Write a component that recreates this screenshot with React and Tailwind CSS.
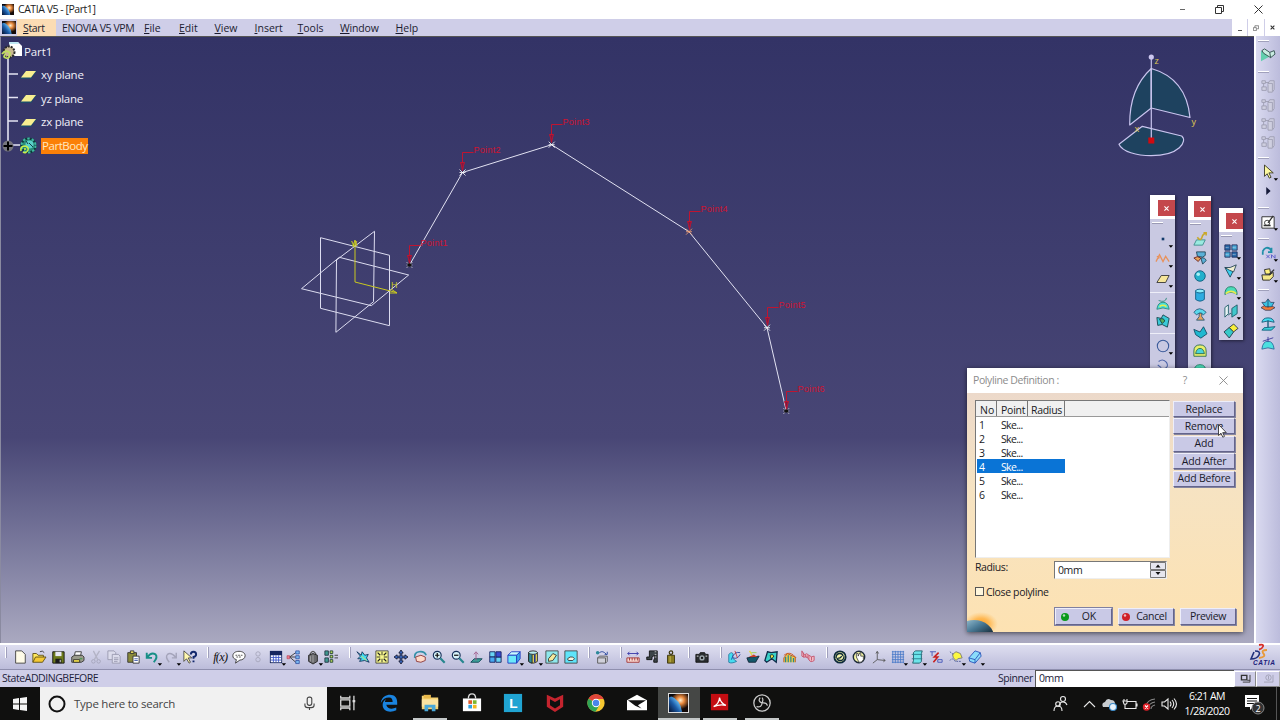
import clsx from 'clsx';

const C = '#45dcf0';
const N = '#16305a';

// 16x16 glyphs for every toolbar
const glyphs = {
    newFile: <path d="M3 1h7l4 4v10H3z" fill="#fffbe8" stroke="#3c3c3c" />,
    open: <g stroke="#5a4a10"><path d="M1 14V4h4l2 2h6v3" fill="#ffe95e" /><path d="M1 14l3-6h12l-4 6z" fill="#f5c935" /><path d="M9 2q3-2 5 1" fill="none" stroke="#333" /></g>,
    save: <g><path d="M2 2h13v13H2z" fill="#6d7a1c" stroke="#111" /><path d="M5 2h7v5H5z" fill="#e8e8f4" /><path d="M5 10h7v5H5z" fill="#1a1a1a" /><path d="M10 11h1v3h-1z" fill="#fff" /></g>,
    print: <g stroke="#333"><path d="M5 7l1-5h7l-1 5z" fill="#fff" /><path d="M2 8l3-2h9l2 2v4l-3 2H2z" fill="#9a9a8c" /><path d="M4 11h7v3H4z" fill="#f4e04a" /><path d="M11 10h3" stroke="#2a9a3a" /></g>,
    cut: <g fill="none" stroke="#a2a2b8"><path d="M5 1l5 10M12 1L6 11" stroke="#b4b4c6" strokeWidth="1.500" /><circle cx="5" cy="13" r="2" /><circle cx="11" cy="13" r="2" /></g>,
    copy: <g fill="#dcdcec" stroke="#9898ae"><path d="M1 1h7l2 2v8H1z" /><path d="M6 5h7l2 2v8H6z" /><path d="M8 9h5M8 11h5M8 13h4" /></g>,
    paste: <g stroke="#333"><path d="M2 3h10v11H2z" fill="#8a8a3a" /><path d="M5 1h4v3H5z" fill="#e6d860" /><path d="M8 7h7v8H8z" fill="#fff" /><path d="M9.500 10h4M9.500 12h4" stroke="#3a55aa" /></g>,
    undo: <path d="M2 3v6h6M3 8q4-6 9-3 3 3-2 9" fill="none" stroke="#178f86" strokeWidth="2.200" />,
    redo: <path d="M14 3v6H9M13 8Q8 2 4 5q-3 3 2 9" fill="none" stroke="#a4a4ba" strokeWidth="1.600" />,
    whats: <g><path d="M1 1v12l3-3 3 5 1.500-1L6 9h4z" fill="#fff8b0" stroke="#222" strokeWidth=".8" /><path d="M9 5q0-3 3-3t3 3q0 2-3 3v2M12 12v2" fill="none" stroke="#13286c" strokeWidth="2.200" /></g>,
    fx: <text x="-1" y="13" className="fill-[#111] font-['Liberation_Serif'] text-[14px] italic" textLength="17">f(x)</text>,
    chat: <g><path d="M8 1.500c4 0 7 2 7 5s-3 5-6 5L4 15l1-4C2 10 1 9 1 6.500c0-3 3-5 7-5z" fill="#fff" stroke="#333" /><path d="M4 6h8M5 8h6" stroke="#444" strokeDasharray="2 1" /></g>,
    link: <g fill="none" stroke="#a6a6ba"><circle cx="8" cy="4.500" r="2.500" /><circle cx="8" cy="11" r="2.500" /></g>,
    table: <g><path d="M1 1h14v14H1z" fill="#16265e" /><path d="M2 6h12v8H2z" fill="#fff" /><path d="M2 8.500h12M2 11.500h12M5 6v8M8 6v8M11 6v8" stroke="#3a55c8" /></g>,
    tree: <g><path d="M3 8l7-5M3 8h7M3 8l7 6" stroke="#333" fill="none" /><path d="M0 6.500h3v3.500H0z" fill="#ee7c90" stroke="#a34" strokeWidth=".6" /><path d="M10 1h4v3.500h-4zM10 6.500h4v3.500h-4zM10 12h4v3.500h-4z" fill="#7ab8f0" stroke="#24429a" strokeWidth=".8" /></g>,
    lock: <g><path d="M5 7V4q3-5 6 0v3" fill="none" stroke="#555" strokeWidth="1.500" /><path d="M3 6l5-2 5 2v7l-5 3-5-3z" fill="#6a6a6e" stroke="#222" /><path d="M5 7v6M8 6v8" stroke="#aaa" /></g>,
    struct: <g><path d="M1 1h4v5H1zM1 9h4v5H1z" fill="#3f9a90" stroke="#234" /><path d="M7 1h3v3H7zM7 6h3v3H7zM7 11h3v3H7z" fill="#b8d85a" stroke="#243" /><path d="M12 6h4M12 9h4" stroke="#333" /></g>,

    fly: <g><path d="M1 2l5 4 1-4 3 4 4-1-2 4 3 5-5-2-6 1 2-3-4 0 3-3z" fill={C} stroke={N} /><path d="M6 7l6 5" stroke="#e8e050" /></g>,
    fitAll: <g><path d="M1 1h14v14H1z" fill="#f6f68c" stroke="#444" /><path d="M3 3l3 3M13 3l-3 3M3 13l3-3M13 13l-3-3" stroke="#222" strokeWidth="1.400" /><path d="M8 2v4M8 10v4M2 8h4M10 8h4" stroke="#222" /></g>,
    pan: <g fill="#3a68c0"><path d="M8 0l2.500 3.500H9V7h3.500V5.500L16 8l-3.500 2.500V9H9v3.500h1.500L8 16l-2.500-3.500H7V9H3.500v1.500L0 8l3.500-2.500V7H7V3.500H5.500z" stroke="#112" strokeWidth=".9" /></g>,
    rotate: <g><path d="M2 9q-1-6 5-7 6-1 8 4" fill="none" stroke="#3490a8" strokeWidth="2" /><path d="M3 8l6-2 5 2v4l-5 2-5-1z" fill="#ffd9c8" stroke="#833" /></g>,
    zoomIn: <g><circle cx="6" cy="6" r="4.500" fill="#d8f2f8" stroke="#16305a" strokeWidth="1.300" /><path d="M9.500 9.500l5 5" stroke="#26868e" strokeWidth="2.500" /><path d="M6 3.500v5M3.500 6h5" stroke="#111" strokeWidth="1.400" /></g>,
    zoomOut: <g><circle cx="6" cy="6" r="4.500" fill="#d8f2f8" stroke="#16305a" strokeWidth="1.300" /><path d="M9.500 9.500l5 5" stroke="#26868e" strokeWidth="2.500" /><path d="M3.500 6h5" stroke="#111" strokeWidth="1.400" /></g>,
    normal: <g><path d="M2 14l4-4h9l-4 4z" fill="#3aa098" stroke="#145" /><path d="M8 12V3M5.500 5L8 2l2.500 3" fill="none" stroke="#a05a8a" /></g>,
    multi: <g stroke="#16205e"><path d="M2 2h6v6H2zM9 8h6v6H9z" fill="#69d4f4" /><path d="M9 2h6v6H9z" fill="#3a4ad0" /><path d="M2 8h6v6H2z" fill="#48a8f0" /></g>,
    iso: <g stroke="#2038c0"><path d="M1 6l4-4h10l-4 4z" fill="#c8faff" /><path d="M1 6h10v9H1z" fill="#6ce8fa" /><path d="M11 6l4-4v8l-4 5z" fill="#3aa8e8" /></g>,
    shade: <g stroke="#222"><path d="M3 3v10q5 4 10 0V3z" fill="#f2e25a" /><path d="M3 3v10q2 2 4 2V4z" fill="#2f8a98" /><ellipse cx="8" cy="3" rx="5" ry="2" fill="#b8ecf0" /><path d="M10 5v9" stroke="#23338a" strokeWidth="2" /></g>,
    hide: <g><path d="M1 1h14v14H1z" fill="#8ee8ec" stroke="#444" /><path d="M4 10l5-6 4 2-4 6-5 1z" fill="#f5e99a" stroke="#333" /></g>,
    swap: <g><path d="M1 1h14v14H1z" fill="#5ee4fa" stroke="#444" /><path d="M4 10q3-3 6-2l2 2-2 2H5z" fill="#f4f4e0" stroke="#333" /></g>,
    swapVis: <g><circle cx="3" cy="3" r="2" fill="#2c8a9a" /><path d="M5 3q4-3 8 2M11 5h3V2" fill="none" stroke="#24429a" /><path d="M3 9l2-2h9v6l-2 2H3z" fill="#d0d0da" stroke="#555" /><path d="M3 9h9v6" fill="none" stroke="#555" /></g>,
    measure: <g><path d="M2 4h12M4 2L2 4l2 2M12 2l2 2-2 2" fill="none" stroke="#3334a8" /><path d="M1 9h14v5H1z" fill="#f8d8d0" stroke="#a03030" /><path d="M4 9v3M7 9v3M10 9v3M13 9v3" stroke="#a03030" /></g>,
    caliper: <g><path d="M5 1h9v13h-4v-3h1V6L8 8v3H2V8h3z" fill="#3c4448" stroke="#111" /><path d="M11 2h2M11 5h2M11 8h2" stroke="#ccc" /></g>,
    weight: <g stroke="#3a340c"><circle cx="8" cy="3" r="2" fill="none" strokeWidth="1.400" /><path d="M4 6h8v9H4z" fill="#8a7c22" /><path d="M7 7v7" stroke="#cfc25a" /></g>,
    camera: <g><path d="M1 5h4l1-2h5l1 2h3v9H1z" fill="#2a2d30" stroke="#111" /><circle cx="8" cy="9" r="3" fill="#9aa4aa" /><circle cx="8" cy="9" r="1.300" fill="#111" /><path d="M2 7h2M12 7h2" stroke="#eee" /></g>,

    sketchA: <g fill="none"><path d="M2 5q4-4 5 0-2 5 4 8-6 3-9 1z" fill={C} stroke="#2a7aa0" /><path d="M5 11Q8 1 15 3M7 9q5 2 8-4" stroke="#24429a" /><path d="M9 1l3 8" stroke="#c33" /></g>,
    ship: <g><path d="M1 9l14-2-4 7H3z" fill="#14586a" stroke="#123" /><path d="M3 8l6-3 4 3z" fill="#c83a2a" /><path d="M4 1l3 5" stroke="#e8d840" strokeWidth="1.500" /><path d="M6 3h6" stroke="#9ad050" /></g>,
    meshy: <g><path d="M4 2l4 1 7-1-1 12-5-4-6 4-2-2z" fill="#3ad0c8" stroke="#0f2c4a" strokeWidth="1.500" /><path d="M7 6q4-2 4 2l-3 2z" fill="#f2e840" stroke="#123" /></g>,
    comb: <g><path d="M1 14V9l4-5 4 2 5 2v6" fill="#f2c84a" stroke="#b05018" /><path d="M3 14V8M6 14V6M9 14V7M12 14V9" stroke="#2a8a8a" strokeWidth="1.400" /><path d="M1 6q7-6 14 3" stroke="#d05a20" fill="none" /></g>,
    waves: <g fill="none" stroke="#c4506a"><path d="M1 1v6q2 2 4 1t4 3 6 1V7q-3 2-6-1T5 5 1 1" fill="#f0bcc6" /><path d="M3 3v5M5 5v3M7 6v3M9 6v5M12 8v4" /></g>,
    swirl: <g><circle cx="8" cy="8" r="6.500" fill="#f6f6a8" stroke="#0d2a3a" strokeWidth="2" /><path d="M3.500 9q0-5 4.500-5 3 0 3.500 3M12.500 7q0 5-4.500 5-3 0-3.500-3M6 9q2 1 4-2" fill="none" stroke="#0d2a3a" strokeWidth="1.500" /></g>,
    swirlHand: <g><circle cx="8" cy="8" r="6.500" fill="#f6f6a8" stroke="#1d2a3a" strokeWidth="1.600" /><path d="M5 8V4h2v3l2-4h1v4h3v4q-2 4-5 3z" fill="#fff" stroke="#222" strokeWidth=".8" /></g>,
    axis: <g stroke="#555" fill="none"><path d="M6 2v9l9 1M6 11l-5 4M4.500 4L6 1.500 7.500 4M13 10l2 2-2 1.500" /></g>,
    grid: <g stroke="#4a7ac8" fill="none"><path d="M1 2h14M1 5h14M1 8h14M1 11h14M1 14h14M2 1v14M5 1v14M8 1v14M11 1v14M14 1v14" /></g>,
    slab: <g stroke="#1f5a66"><path d="M4 3l2-2h8l-1 3v9l-2 2H3l1-3z" fill="#6ce4ea" /><path d="M2 5h12M2 10h12" stroke="#2a7a8a" /></g>,
    bolt: <g fill="none"><path d="M1 2h7M3.500 2v5M10 11h5v3h-5z" stroke="#4052b8" /><path d="M11 3L6 8h4l-5 6" stroke="#c82020" strokeWidth="1.800" /></g>,
    select: <g><path d="M4 5l4-3 5 2 2 5-5 1-2 2-3-3z" fill="#fcf840" stroke="#777" /><path d="M1 2l4 3M1 12q3-4 6 1h7" fill="none" stroke="#4a5a98" strokeDasharray="2 1" /></g>,
    eraser: <g stroke="#2850b8"><path d="M1 9l7-8 6 2 1 4-7 8-6-2z" fill="#8adcfa" /><path d="M1 9l7 2 6-8M8 11v4" fill="none" /></g>,

    // right and floating toolbars
    planeGreen: <g stroke="#2b4a48"><path d="M0 15V3l11 6z" fill="#63cfae" stroke="none" /><path d="M1 3l3-2 6 4 5-2 1 4-5 4-8-5z" fill="#c8ece0" /><path d="M10 5l1 6" /></g>,
    ghost: <g fill="#cfcfe0" stroke="#9c9cb0"><path d="M8 5l2-3h5v10l-2 3H8z" /><path d="M8 5h5v9" /><path d="M1 2h4v3H1zM1 9h5v4H1z" /><path d="M3 5v4M5 4h4" /></g>,
    cursor: <path d="M4 0v13l3-3 2.500 5 2-1L9 9h5z" fill="#fdf9a0" stroke="#332" />,
    play: <path d="M6 3.500l5 4.500-5 4.500z" fill="#161a3a" />,
    sketcher: <g><path d="M1 2h14v13H1z" fill="#fff" stroke="#222" /><path d="M3 12h8M8 9l6-8" fill="none" stroke="#333" strokeWidth="1.500" /><circle cx="7" cy="9" r="3" fill="none" stroke="#333" /></g>,
    update: <g><path d="M2 6q3-6 8-3l2 3M12 2v5H8M2 6v4" fill="none" stroke="#1f8fa8" strokeWidth="2" /><path d="M6 10l4 4M10 10l-4 4M12 14v-4l4 4v-4" stroke="#5252c8" fill="none" /></g>,
    boxOpen: <g stroke="#222"><path d="M1 9h9l4-3v5l-4 4H2z" fill="#f4e88a" /><path d="M4 3l6-1 1 6H5z" fill="#fff280" /><path d="M9 9l6-6" stroke="#333" strokeWidth="1.600" /></g>,
    flower: <g stroke="#235" strokeWidth=".8"><path d="M0 11l5-3h5l6 3-5 3H5z" fill="#f0783a" /><path d="M1 5l4 0 3-4 3 4 4 0-3 5H5z" fill="#3ac4e4" /><path d="M8 2v9" /></g>,
    sweepI: <g stroke="#0f5a78"><path d="M1 6q1-5 7-5t7 5q-7-3-14 0z" fill={C} /><path d="M8 4v8" strokeWidth="1.500" /><path d="M1 15q2-4 6-3l9-1-4 4H2z" fill="#3ad2da" /></g>,
    dome: <g stroke="#2a6a9a"><path d="M1 15q1-9 7-9t7 9q-7-3-14 0z" fill="#4ae0e0" /><path d="M2 6l12-4M8 1v6" stroke="#3a3a9a" /></g>,
    dot: <path d="M6.500 6.500h3v3h-3z" fill="#123a6a" />,
    zigzag: <path d="M0 11l4-8 4 8 3-6 4 6M1 5l3 2" fill="none" stroke="#e8925c" strokeWidth="1.500" />,
    plane: <path d="M1 12l5-8h9l-4 8z" fill="#f6e69a" stroke="#333" />,
    hat: <g stroke="#2a8a7a"><path d="M3 4q8 3 9-3" fill="none" /><path d="M1 14q1-8 7-8t7 8q-7-3-14 0z" fill="#4adcd8" /><path d="M4 11q4-3 8 0" stroke="#e8f04a" fill="none" strokeWidth="1.800" /></g>,
    patch: <g stroke="#13424a"><path d="M1 4l5 1 2-4 7 4-2 10-6-3-5 1z" fill="#3acad8" /><path d="M4 6q5-2 6 2l-3 3z" fill="#58b05a" /></g>,
    circle: <circle cx="8" cy="8" r="6.500" fill="none" stroke="#3a5a9a" strokeWidth="1.200" />,
    arc: <path d="M3 4q5-4 9 1 3 5-2 7M2 8l4 3" fill="none" stroke="#4a62a8" strokeWidth="1.200" />,
    curve: <g><path d="M1 15l3-6 10 0-3 6z" fill="#9aeae0" stroke="#3a8a8a" /><path d="M5 6q4 6 6-2l3-3M12 1h3v3" fill="none" stroke="#c8a82a" strokeWidth="1.800" /></g>,
    wrap: <g><path d="M4 1h10v4l-3 2-6-1zM9 8q5-1 6 3l-4 4z" fill="#5ab0d8" stroke="#245" /><path d="M1 8q4-3 8 0l-3 4z" fill="#e8a45a" stroke="#622" /></g>,
    sphere: <g><circle cx="8" cy="8" r="6" fill="#22b0cc" stroke="#0f5a7a" /><circle cx="6" cy="6" r="2" fill="#a8f0f4" /></g>,
    cyl: <g stroke="#125a82"><path d="M3 3v10q5 4 10 0V3z" fill="#2eace0" /><ellipse cx="8" cy="3.500" rx="5" ry="2.200" fill="#8cecfa" /></g>,
    revolve: <g stroke="#235a7a"><path d="M1 6q6-8 14 0l-3 3q-4-4-8 0z" fill="#5ad8ec" /><path d="M7 7h3v4l3 4H4l3-4z" fill="#e8a05a" /></g>,
    offset: <path d="M1 5l7 3 4-6 4 8-7 5-6-4z" fill="#1fb8d0" stroke="#134a62" />,
    fill: <g stroke="#2a6a4a"><path d="M1 14V8q0-7 7-7t7 7v6z" fill="#e8f06a" /><path d="M3 11q1-6 5-6t5 6z" fill="#4ad4d8" /></g>,
    quad: <g stroke="#1f2c5a"><path d="M1 1h6v6H1zM9 9h6v6H9z" fill="#2a6aaa" /><path d="M9 1h6v6H9zM1 9h6v6H1z" fill="#4aaad8" /><path d="M2 4h4M10 4h4M2 12h4M10 12h4" stroke="#bcd" strokeDasharray="1 1" /></g>,
    trim: <g stroke="#245"><path d="M1 4l10 3-4 8z" fill="#3ad0f0" /><path d="M1 4l6 0 7-3-3 8-5-2z" fill="#f0eed0" /></g>,
    shell: <g stroke="#1f7a62"><path d="M1 12q0-9 7-9t7 9q-7-5-14 0z" fill="#4adcb8" /><path d="M2 11q6-5 12 0" stroke="#e8ec50" strokeWidth="2" fill="none" /></g>,
    translate: <g stroke="#1d5a66"><path d="M1 4l4-3v10l-4 4z" fill="#e8f4f4" /><path d="M9 5l6-4v10l-6 4z" fill="#42c8cc" /><path d="M5 13q2-4 4-1" fill="none" /></g>,
    extrap: <g stroke="#234"><path d="M0 9l6-5 5 5-5 7z" fill="#35c8c8" /><path d="M6 4l5-4 5 5-5 4z" fill="#f8ee3c" /></g>,
};

const Icon = ({ name, arrow }) => (
    <svg viewBox="0 0 16 16" className="h-[14px] w-[14px] shrink-0 overflow-visible" aria-hidden="true">
        {glyphs[name]}
        {arrow && <path d="M14.500 15h5l-2.500 3z" fill="#000" />}
    </svg>
);

const CatiaIcon = ({ className }) => (
    <svg viewBox="0 0 16 16" className={className} preserveAspectRatio="none" aria-hidden="true">
        <defs>
            <radialGradient id="flare" cx=".6" cy=".35" r=".5">
                <stop offset="0" stopColor="#fff0d0" />
                <stop offset=".4" stopColor="#e8883c" />
                <stop offset="1" stopColor="#140a08" />
            </radialGradient>
            <linearGradient id="planet" x1="1" y1="0" x2="0" y2="1">
                <stop offset=".3" stopColor="#6ac4fa" />
                <stop offset=".6" stopColor="#1c5ca8" />
                <stop offset="1" stopColor="#06102c" />
            </linearGradient>
        </defs>
        <path d="M0 0h16v16H0z" fill="url(#flare)" />
        <path d="M0 1q10 4 11 15H0z" fill="url(#planet)" />
        <path d="M0 0h6L0 3z" fill="#08080e" />
    </svg>
);

const menus = [
    ['File', 'ml-[10px] w-[35px]'],
    ['Edit', 'w-[35.500px]'],
    ['View', 'w-[40px]'],
    ['Insert', 'w-[43px]'],
    ['Tools', 'w-[42.500px]'],
    ['Window', 'w-[55.500px] tracking-[-0.150px]'],
    ['Help', 'w-[40px]'],
];

const TitleBar = () => (
    <header className="flex h-[19px] items-center bg-white pl-[2px]">
        <CatiaIcon className="h-[11px] w-[12px]" />
        <h1 className="ml-1 flex-1 pt-px text-[10.500px] tracking-[-0.450px] text-[#222]">CATIA V5 - [Part1]</h1>
        <svg viewBox="0 0 100 19" className="h-[19px] w-[100px]" fill="none" stroke="#333">
            <path d="M-4 9.500h9" stroke="#666" />
            <path d="M35.500 7.500h6v6h-6zM37.500 7.500v-2h6v6h-2" />
            <path d="M74.500 5.500l8 8M82.500 5.500l-8 8" />
        </svg>
    </header>
);

const MenuBar = () => (
    <nav className="flex h-[17px] items-center bg-[#cfcee8] text-[10.500px] text-[#1c1c30]">
        <div className="flex h-full w-[17px] items-center justify-center">
            <CatiaIcon className="h-[13px] w-[14px]" />
        </div>
        <div className="flex h-full w-[39px] items-center bg-[#fbdcb4] pt-[2px] pl-[6px] tracking-[-0.350px]">
            <span><u>S</u>tart</span>
        </div>
        <div className="w-[78px] pt-[2px] pl-[6px] tracking-[-0.4px] whitespace-nowrap">ENOVIA V5 VPM</div>
        {menus.map(([label, cls]) => (
            <div key={label} className={clsx('pt-[2px]', cls)}><u>{label[0]}</u>{label.slice(1)}</div>
        ))}
        <div className="ml-auto flex h-full w-[48px] gap-px">
            <span className="flex flex-1 items-end justify-center bg-white pb-[5px]"><i className="h-px w-[4px] bg-[#555]" /></span>
            <span className="flex flex-1 items-center justify-center bg-white">
                <svg viewBox="0 0 8 8" className="h-[6px] w-[6px]" fill="none" stroke="#666"><path d="M.500 3.500h4v4h-4zM2.500 3V1h5v4h-2" /></svg>
            </span>
            <span className="flex flex-1 items-center justify-center bg-white">
                <svg viewBox="0 0 8 8" className="h-[5px] w-[5px]" stroke="#333" strokeWidth="1.800"><path d="M1 1l6 6M7 1L1 7" /></svg>
            </span>
        </div>
    </nav>
);

const points = [
    [409.5, 265, '#111'],
    [462.5, 172.5, '#fff'],
    [551.7, 144.7, '#fff'],
    [689, 231.7, '#f5a070'],
    [767, 327.7, '#fff'],
    [786.3, 411, '#111'],
];

const Leader = ({ x, y, label }) => {
    const lx = Math.floor(x) + 0.5;
    const ly = Math.floor(y - 20) + 0.5;
    return (
        <g>
            <path d={`M${lx + 11} ${ly}H${lx}V${ly + 10}`} fill="none" stroke="#c01430" />
            <path d={`M${lx - 2} ${ly + 10}h4l-1 3-1 5-1-5z`} fill="#7e1a44" stroke="#c01430" />
            <text x={lx + 11} y={y - 19.5} textLength="27" className="fill-[#d01230] font-['Liberation_Sans'] text-[9px]">{label}</text>
        </g>
    );
};

const Scene = () => (
    <svg viewBox="0 37 1254 606" className="absolute inset-0 h-[606px] w-[1254px]">
        <g fill="none" stroke="#dcdcf0">
            <path d="M320.500 237.700l69 17.600v70.400l-69-17.400z" />
            <path d="M374.500 231.300l-38 28.700-.6 72.300 37.600-30.600z" />
            <path d="M301.500 288.700l37.800-31.400 69.400 17.700-37.400 30.700z" />
        </g>
        <g fill="none" stroke="#c8c820">
            <path d="M355 241v41l42 10.700M353 246l2-6 2 6M391 289l6 4-7 0" />
        </g>
        <text x="351" y="247" className="fill-[#d4d420] font-['Liberation_Sans'] text-[9px]">V</text>
        <text x="391" y="288" className="fill-[#c8c820] font-['Liberation_Sans'] text-[9px]">H</text>
        <polyline points={points.map(([x, y]) => `${x},${y}`).join(' ')} fill="none" stroke="#e2e2f2" />
        {points.map(([x, y, mark], i) => (
            <g key={i}>
                <Leader x={x} y={y} label={`Point${i + 1}`} />
                <path d={`M${x - 3} ${y - 3}l6 6M${x + 3} ${y - 3}l-6 6M${x - 3} ${y}h6`} stroke={mark === '#111' ? '#c8c8d0' : mark} strokeWidth=".8" />
                {mark === '#111' && <path d={`M${x - 2} ${y - 1.5}h4v3h-4z`} fill="#111" />}
            </g>
        ))}

        {/* compass */}
        <g fill="#1e425f" stroke="#c9c4ee" strokeWidth="1.200" strokeLinejoin="round">
            <path d="M1151.300 68.500q-22 20-21.600 56.500l21.600-17z" />
            <path d="M1151.300 68.500q35 10 38.700 49l-38.700-9.500z" />
            <path d="M1142.300 126.300l39.400 9.700c6 5-2 19.700-30.700 19.700-14 0-29-4-32-11.400z" />
            <path d="M1151.300 57v81" />
        </g>
        <circle cx="1151.300" cy="57" r="2.600" fill="#cdc8f0" />
        <path d="M1148.300 137.500h6v6h-6z" fill="#d00a10" />
        <g className="fill-[#e0cc50] font-['Open_Sans'] text-[9px]">
            <text x="1154.500" y="64">z</text>
            <text x="1191.500" y="125">y</text>
            <text x="1134.500" y="132">x</text>
        </g>
    </svg>
);

const Gear = () => (
    <svg viewBox="0 0 18 18" className="h-[18px] w-[18px]">
        <circle cx="9.500" cy="8.500" r="7" fill="#2a8a7a" stroke="#0d3a3a" strokeWidth="2" />
        <circle cx="9.500" cy="8.500" r="7" fill="none" stroke="#3fb8a0" strokeWidth="2" strokeDasharray="2.500 2" />
        <circle cx="10.500" cy="7.500" r="4" fill="#5ad0c8" />
        <path d="M10 6l4 4M7 4l2 3" stroke="#143a4a" />
        <path d="M2 14q-1-5 4-5 4 1 3 4-2 4-5 2M5 12h2" fill="none" stroke="#c8f04a" strokeWidth="1.600" />
    </svg>
);

const planes = ['xy plane', 'yz plane', 'zx plane'];

const SpecTree = () => (
    <div className="absolute top-[3px] left-[2px] text-[11.500px] text-[#f0f0f8]">
        <svg viewBox="0 0 30 120" className="absolute inset-0 h-[120px] w-[30px]" stroke="#e4e4f2" fill="none">
            <path d="M6 14v92" strokeWidth="1.600" />
            <path d="M6 34h10M6 57.500h10M6 81h10M6 105h12" strokeWidth="1.300" />
        </svg>
        <div className="relative flex h-[23.600px] items-center">
            <svg viewBox="0 0 22 20" className="-ml-px h-[20px] w-[22px]">
                <path d="M8 0h9l4 4v10H10z" fill="#fff" />
                <path d="M8 0h9l1 2H8z" fill="#bfe8f4" />
                <circle cx="8" cy="10" r="5.500" fill="#c8b890" stroke="#2a2a2a" strokeDasharray="2 1" strokeWidth="2" />
                <path d="M1 12q4-5 8-1 0 6-4 5t0-4" fill="none" stroke="#c0e060" strokeWidth="1.800" />
            </svg>
            <span className="ml-px pb-px tracking-[-0.1px]">Part1</span>
        </div>
        {planes.map((label) => (
            <div key={label} className="relative flex h-[23.600px] items-center pl-[17px]">
                <svg viewBox="0 0 18 10" className="h-[10px] w-[18px]">
                    <path d="M1 9l6-8h11l-6 8z" fill="#1c4a6a" />
                    <path d="M2 7.500L7 1h10l-5 6.500z" fill="#f8ee90" />
                </svg>
                <span className="ml-1 pb-[1.500px] tracking-[-0.250px]">{label}</span>
            </div>
        ))}
        <div className="relative flex h-[23.600px] items-center">
            <svg viewBox="0 0 12 12" className="h-[12px] w-[12px]">
                <circle cx="6" cy="6" r="5.500" fill="#77777f" />
                <path d="M6 1.500v9M1.500 6h9" stroke="#000" strokeWidth="2" />
            </svg>
            <span className="ml-[5px]"><Gear /></span>
            <span className="ml-[4px] flex h-[16px] w-[47px] items-center bg-[#fb8008] pb-px pl-px tracking-[-0.450px] text-[#ffe8c0]">PartBody</span>
        </div>
    </div>
);

const Palette = ({ className, pad, children }) => (
    <div className={clsx('absolute flex flex-col overflow-hidden bg-[#c9c9e2] shadow-[1px_1px_3px_rgba(0,0,0,0.500)]', className)}>
        <div className="flex h-[24px] shrink-0 items-end justify-end bg-white pb-[3px]">
            <span className="flex h-[16px] w-[17px] items-center justify-center bg-[#c4474c]">
                <svg viewBox="0 0 6 6" className="h-[5px] w-[5px]" stroke="#fff" strokeWidth="1.300"><path d="M.5.5l5 5M5.500.5l-5 5" /></svg>
            </span>
        </div>
        <div className="mt-[3px] ml-[2px] h-[2px] w-[11px] shrink-0 border-b border-[#9a9ab4] bg-white" />
        <div className={clsx('flex flex-col items-center', pad)}>{children}</div>
    </div>
);

const Slot = ({ name, arrow, className }) => (
    <div className={clsx('flex w-full shrink-0 items-center justify-center', className)}>
        <Icon name={name} arrow={arrow} />
    </div>
);

const Rule = () => <div className="my-[2.500px] h-px w-full shrink-0 bg-[#eeeef8]" />;

const Palettes = () => (
    <>
        <Palette className="top-[158px] left-[1150px] h-[180px] w-[25px]" pad="pt-[5px]">
            <Slot name="dot" arrow className="h-[20px]" />
            <Slot name="zigzag" arrow className="h-[20px]" />
            <Slot name="plane" arrow className="h-[20px]" />
            <Rule />
            <Slot name="hat" className="h-[17.500px]" />
            <Slot name="patch" className="h-[17.500px]" />
            <Rule />
            <Slot name="circle" arrow className="h-[19px]" />
            <Slot name="arc" className="h-[19px]" />
        </Palette>
        <Palette className="top-[159px] left-[1188px] h-[180px] w-[23px]" pad="pt-[5px]">
            {['curve', 'wrap', 'sphere', 'cyl', 'revolve', 'offset', 'fill', 'shell'].map((name) => (
                <Slot key={name} name={name} className="h-[18.600px]" />
            ))}
        </Palette>
        <Palette className="top-[171px] left-[1219px] h-[132px] w-[24px]" pad="pt-[4px]">
            {['quad', 'trim', 'shell', 'translate', 'extrap'].map((name) => (
                <Slot key={name} name={name} arrow={name !== 'extrap'} className="h-[20px]" />
            ))}
        </Palette>
    </>
);

const Button = ({ className, children }) => (
    <button className={clsx('flex items-center justify-center border border-t-[#eeeefa] border-r-[#64648c] border-b-[#64648c] border-l-[#eeeefa] bg-[#c9c9e6] pt-px text-[10.500px] whitespace-nowrap text-[#1a1a2a] shadow-[1px_1px_0_#85859f]', className)}>
        {children}
    </button>
);

const Ball = ({ color, className }) => (
    <svg viewBox="0 0 8 8" className={clsx('-mt-px h-[8px] w-[8px]', className)}>
        <circle cx="4" cy="4" r="4" fill={color} />
        <circle cx="3" cy="2.500" r="1.200" fill="#fff" opacity=".7" />
    </svg>
);

const PolylineDialog = () => (
    <section className="absolute top-[331px] left-[967px] flex h-[264px] w-[276px] flex-col overflow-hidden bg-white text-[10.500px] text-[#1a1a24] shadow-[0_1px_5px_rgba(0,0,0,0.600)]">
        <div className="flex h-[25px] shrink-0 items-center pl-[6px] text-[#8c8c8c]">
            <h2 className="flex-1 tracking-[-0.4px]">Polyline Definition :</h2>
            <span className="w-[8px] text-center">?</span>
            <svg viewBox="0 0 10 10" className="mr-[15px] ml-[30px] h-[9px] w-[9px]" stroke="#888"><path d="M.5.5l9 9M9.500.5l-9 9" /></svg>
        </div>
        <div className="relative flex flex-1 flex-col bg-linear-to-b from-[#ecd9ca] via-[#f6e3c2] via-40% to-[#fde2b2] pr-[7px] pl-[8px]">
            <svg viewBox="0 0 40 24" className="absolute bottom-0 left-0 h-[24px] w-[40px]">
                <defs>
                    <radialGradient id="glow"><stop offset="0" stopColor="#ff9a1a" /><stop offset=".5" stopColor="#ffb040" stopOpacity=".8" /><stop offset="1" stopColor="#ffc060" stopOpacity="0" /></radialGradient>
                    <linearGradient id="globe" x2=".7" y2="1"><stop offset="0" stopColor="#b8dcea" /><stop offset=".4" stopColor="#4a7a96" /><stop offset=".75" stopColor="#10222e" /></linearGradient>
                </defs>
                <ellipse cx="14" cy="16" rx="17" ry="12" fill="url(#glow)" />
                <ellipse cx="7" cy="29" rx="20" ry="17" fill="url(#globe)" />
            </svg>
            <div className="flex h-[165px] pt-[7px]">
                <div className="h-[158px] w-[195px] border border-t-[#777] border-r-[#eee] border-b-[#eee] border-l-[#777] bg-white">
                    <div className="flex h-[16px] border-b border-[#999] bg-[#f0f0f0]">
                        <span className="w-[21px] border-r border-[#777] pl-[4px] leading-[18px]">No</span>
                        <span className="w-[31px] border-r border-[#777] pl-[4px] leading-[18px] tracking-[-0.250px]">Point</span>
                        <span className="w-[37px] border-r border-[#777] pl-[3px] leading-[18px] tracking-[-0.3px]">Radius</span>
                    </div>
                    {[1, 2, 3, 4, 5, 6].map((n) => (
                        <div key={n} className={clsx('ml-px flex h-[14px] w-[88px] pl-[2px] leading-[16px]', n === 4 && 'bg-[#0a74d6] text-white')}>
                            <span className="w-[22px]">{n}</span>
                            <span className="tracking-[-0.650px]">Ske...</span>
                        </div>
                    ))}
                </div>
                <div className="ml-[3px] flex flex-1 flex-col gap-[1.400px] pt-px">
                    {['Replace', 'Remove', 'Add', 'Add After', 'Add Before'].map((label) => (
                        <Button key={label} className="h-[16px] w-[62px] tracking-[-0.2px]">{label}</Button>
                    ))}
                </div>
            </div>
            <div className="flex h-[24px] pt-[2px]">
                <label className="w-[79px] leading-[14px] tracking-[-0.4px]">Radius:</label>
                <div className="mt-px flex h-[18px] w-[113px] items-center border border-t-[#777] border-r-[#eee] border-b-[#eee] border-l-[#777] bg-white pl-[3px]">
                    <span className="flex-1 pt-px tracking-[-0.4px]">0mm</span>
                    <svg viewBox="0 0 16 16" className="h-[16px] w-[16px]" stroke="#777">
                        <path d="M.500.500h15v7H.500zM.500 8.500h15v7H.500z" fill="#e6e6ee" />
                        <path d="M8 2.500l2.500 3h-5zM8 13l2.500-3h-5z" fill="#111" stroke="none" />
                    </svg>
                </div>
            </div>
            <div className="flex h-[20px] items-center">
                <span className="mb-px h-[9px] w-[9px] border border-[#555] bg-[#fff6dc]" />
                <label className="ml-[2px] pt-px tracking-[-0.350px]">Close polyline</label>
            </div>
            <div className="relative mt-[6px] flex justify-end gap-[6px]">
                <Button className="h-[17px] w-[57px] pr-[10px] outline outline-[#8080a0]"><Ball color="#0a9a1c" className="mr-[13px]" />OK</Button>
                <Button className="h-[17px] w-[56px] pr-[3px]"><Ball color="#d02028" className="mr-[6px]" /><span className="tracking-[-0.350px]">Cancel</span></Button>
                <Button className="h-[17px] w-[56px] tracking-[-0.350px]">Preview</Button>
            </div>
        </div>
    </section>
);

const Pointer = () => (
    <svg viewBox="0 0 9 14" className="absolute top-[387px] left-[1218px] h-[14px] w-[9px]">
        <path d="M.500.500v11l2.500-2.300 1.800 4 1.700-.8-1.800-3.800H8.300z" fill="#fff" stroke="#222" strokeWidth=".8" />
    </svg>
);

const rightGroups = [
    ['h-[31px] pt-[5px]', 'h-[19px]', ['planeGreen']],
    ['h-[86px] pt-[6px]', 'h-[18.700px]', ['ghost', 'ghost', 'ghost', 'ghost']],
    ['h-[50px] pt-[5px]', 'h-[19px]', ['cursor*', 'play']],
    ['h-[31px] pt-[5px]', 'h-[20px]', ['sketcher*']],
    ['h-[51px] pt-[4px]', 'h-[21px]', ['update*', 'boxOpen*']],
    ['h-[70px] pt-[6px]', 'h-[19px]', ['flower', 'sweepI', 'dome']],
];

const RightToolbar = () => (
    <aside className="flex w-[26px] flex-col border-l-2 border-white bg-linear-to-r from-[#dadaf0] to-[#bcbcdc] pt-[4px]">
        {rightGroups.map(([box, slot, items]) => (
            <div key={box + items[0]} className={clsx('relative flex flex-col', box)}>
                <i className="absolute top-0 left-[2px] h-[2px] w-[11px] border-b border-[#a0a0bc] bg-white" />
                {items.map((item, i) => (
                    <Slot key={i} name={item.replace('*', '')} arrow={item.endsWith('*')} className={slot} />
                ))}
            </div>
        ))}
    </aside>
);

const bottomGroups = [
    ['w-[202px] pl-[8px] pr-[10px]', 'newFile open save print cut copy paste undo* redo* whats'],
    ['w-[142px] pl-[7px] pr-[11px]', 'fx chat link table* tree lock* struct'],
    ['w-[239px] pl-[7px] pr-[10px]', 'fly fitAll pan rotate zoomIn zoomOut normal multi iso* shade* hide swap'],
    ['w-[32px] pl-[7px]', 'swapVis'],
    ['w-[68px] pl-[6px] pr-[10px]', 'measure caliper weight'],
    ['w-[32px] pl-[7px]', 'camera'],
    ['w-[106px] pl-[7px] pr-[11px]', 'sketchA ship meshy comb waves'],
    ['w-[164px] pl-[7px] pr-[8px]', 'swirl swirlHand axis grid* slab* bolt select* eraser*'],
];

const BottomToolbar = () => (
    <div className="flex h-[26px] border-t-2 border-white bg-linear-to-b from-[#dedef0] to-[#bcbcda] pl-[5px]">
        {bottomGroups.map(([box, items]) => (
            <div key={items} className={clsx('relative flex items-center justify-between', box)}>
                <i className="absolute top-[2px] left-0 h-[11px] w-[2px] border-r border-[#a0a0bc] bg-white" />
                {items.split(' ').map((item) => (
                    <Icon key={item} name={item.replace('*', '')} arrow={item.endsWith('*')} />
                ))}
            </div>
        ))}
        <svg viewBox="0 0 28 22" className="mr-[4px] ml-auto h-[22px] w-[28px] overflow-visible">
            <path d="M11 0q5-1 4 1.500t-4 3" fill="none" stroke="#d8302a" strokeWidth="1.800" />
            <path d="M7 6q6 0 4 4t-8 4l3-7" fill="none" stroke="#20307a" strokeWidth="1.600" />
            <path d="M19 5q-6 0-4 3 4 4-4 5" fill="none" stroke="#e89a3a" strokeWidth="1.800" />
            <text x="5" y="20" textLength="22" className="fill-[#20207a] font-['Liberation_Sans'] text-[6.500px] font-bold italic">CATIA</text>
        </svg>
    </div>
);

const StatusBar = () => (
    <div className="flex h-[18px] items-center border-t border-[#8f8fae] bg-[#cfcee8] text-[10.500px] text-[#22223a]">
        <span className="flex-1 pl-[2px] tracking-[-0.450px]">StateADDINGBEFORE</span>
        <span className="w-[37px] tracking-[-0.450px]">Spinner</span>
        <div className="flex h-[17px] w-[199px] items-center border-t border-l border-[#555] bg-white pl-[3px] tracking-[-0.4px]">0mm</div>
        <div className="flex h-[16px] w-[22px] items-center justify-center border border-t-white border-r-[#888] border-b-[#888] border-l-white">
            <svg viewBox="0 0 12 10" className="h-[9px] w-[11px]" fill="none" stroke="#333"><path d="M1.500 1.500h6v5h-6z" strokeWidth="1.500" /><path d="M11 1v8H3M8 7h3" /></svg>
        </div>
        <div className="flex h-[16px] w-[24px] items-center justify-center border border-t-white border-r-[#aaa] border-b-[#888] border-l-white">
            <svg viewBox="0 0 12 10" className="h-[9px] w-[11px]" fill="none" stroke="#a0a0b4"><path d="M1 9h10V1" /><circle cx="6" cy="4" r="3" /><path d="M6 2v4" /></svg>
        </div>
    </div>
);

const apps = [
    ['taskview', <g fill="none" stroke="#ddd" strokeWidth="1.400"><path d="M3 7.500h10v7H3zM3 3v2.500h10V3M3 19v-2.500h10V19M17.500 3v16" /><path d="M16 9h3" strokeWidth="2.500" /></g>],
    ['edge', <path d="M2 11C3 4 8 2 12 2c5 0 8 3 8 8v3H8c1 5 7 5 11 3v3c-6 3-15 2-15-6 0-3 2-5 4-6-1 1-1.500 2-1.500 3H15c0-3-1-5-4-5-4 0-7 2-9 6z" fill="#1a84e0" />],
    ['files', <g><path d="M2 3h6l2 2h10v13H2z" fill="#f6d374" /><path d="M4 2h8v4H4z" fill="#e8b84a" /><path d="M2 7h18v8H2z" fill="#fbe3a0" /><path d="M5 20v-7h12v7h-4v-4H9v4z" fill="#4aa8d8" /></g>, 'half'],
    ['store', <g><path d="M1 6h20v14H1z" fill="#fff" /><path d="M7 6q0-5 4-5t4 5" fill="none" stroke="#ddd" strokeWidth="1.500" /><path d="M7 8h4v4H7z" fill="#e05a2a" /><path d="M12 8h4v4h-4z" fill="#7cb82f" /><path d="M7 13h4v4H7z" fill="#2fa0e0" /><path d="M12 13h4v4h-4z" fill="#f4b81f" /></g>],
    ['catalog', <g><path d="M1 1h20v20H1z" fill="#20a4d2" /><text x="7" y="16" className="fill-white font-['Liberation_Sans'] text-[15px] font-bold">L</text></g>],
    ['mcafee', <path d="M2 2l9 4 9-4v13l-9 6-9-6zM5.500 7v6.500l5.500 3.500 5.500-3.500V7L11 10z" fill="#c4242e" fillRule="evenodd" />],
    ['chrome', <g><circle cx="11" cy="11" r="9.500" fill="#f6c730" /><path d="M11 11L2.800 6.200A9.500 9.500 0 0 1 19.400 6.500H11z" fill="#e0453a" /><path d="M11 11L2.800 6.200A9.500 9.500 0 0 0 10.500 20.500L15 13z" fill="#2fa456" /><circle cx="11" cy="11" r="4.600" fill="#fff" /><circle cx="11" cy="11" r="3.600" fill="#4a86ea" /></g>],
    ['mail', <g><path d="M0 8l11-6 11 6v11H0z" fill="#fff" /><path d="M1 8h20l-9 5.500 4 3.500-7-3z" fill="#111" /></g>],
    ['catia', null, 'full'],
    ['acrobat', <g><path d="M1 1h19v18H1z" fill="#c40d12" /><path d="M4 15q6-3 6.500-10 1 6 7 8.500-7-1.500-13.500 1.500z" fill="none" stroke="#fff" strokeWidth="1.400" /></g>, 'half'],
    ['obs', <g fill="none" stroke="#ccc"><circle cx="11" cy="11" r="9" strokeWidth="1.400" /><path d="M9 5q-3 4 2 6 5-1 6 3M11 11q0 5-6 4M11 11q2-4 0-6" strokeWidth="1.300" /></g>, 'half'],
];

const Taskbar = () => (
    <footer className="flex h-[33px] bg-[#10100f] text-white">
        <div className="flex w-[40px] items-center justify-center">
            <svg viewBox="0 0 14 14" className="h-[14px] w-[14px]" fill="#f4f4f4"><path d="M0 2l6-1v5.500H0zM7 .9L14 0v6.500H7zM0 7.500h6V13l-6-1zM7 7.500h7V14l-7-.9z" /></svg>
        </div>
        <div className="flex w-[287px] items-center bg-[#f1f1f1] pl-[8px]">
            <svg viewBox="0 0 18 18" className="h-[18px] w-[18px]"><circle cx="9" cy="9" r="7.500" fill="none" stroke="#111" strokeWidth="2" /></svg>
            <span className="ml-[8px] flex-1 text-[11.500px] tracking-[-0.250px] text-[#444]">Type here to search</span>
            <svg viewBox="0 0 12 16" className="mr-[12px] h-[15px] w-[11px]" fill="none" stroke="#444" strokeWidth="1.200"><rect x="3.500" y="1" width="5" height="9" rx="2.200" /><path d="M1 8v2q0 2.500 3 2.500h4q3 0 3-2.500V8M6 12.500V15" /></svg>
        </div>
        {apps.map(([id, art, state]) => (
            <div key={id} className={clsx('flex w-[41.400px] flex-col items-center pt-[6px]', state === 'full' && 'bg-[#454745]')}>
                {art
                    ? <svg viewBox="0 0 22 22" className="h-[20px] w-[20px] overflow-visible">{art}</svg>
                    : <CatiaIcon className="h-[20px] w-[21px] border-[1.500px] border-[#ddd]" />}
                {state && <i className={clsx('mt-auto h-[2px] bg-[#c4c8c8]', state === 'full' ? 'w-full' : 'w-[34px]')} />}
            </div>
        ))}
        <div className="ml-auto flex items-center">
            <svg viewBox="0 0 130 22" className="h-[22px] w-[130px]" fill="none" stroke="#e8e8e8" strokeWidth="1.100">
                <circle cx="13" cy="6" r="2.500" /><path d="M9 14q0-5 4-5 3 0 4 3" />
                <circle cx="8" cy="11" r="2.300" /><path d="M4 18q0-5 4-5t4 5" />
                <path d="M34 14l5.500-5.500L45 14" />
                <path d="M53 14q-2-4 2-5 2-5 6-2 4 0 4 4v3z" fill="#c8ccd0" stroke="none" />
                <circle cx="63" cy="14" r="3.500" fill="#e8f2fa" stroke="#3a8ac8" />
                <path d="M74 8v-2M77 8v-2M73 8h4v2q-1 2-3 1zM77 8.500h9v7H75v-4M87 10.500v3" />
                <path d="M96 13q1-6 9-7M98 15q1-5 7-6M101 16q0-3 4-4" stroke="#888" />
                <circle cx="96.500" cy="14" r="3.700" fill="#e02028" stroke="none" /><path d="M95 12.500l3 3M98 12.500l-3 3" stroke="#fff" />
                <path d="M112 9h2.500l3.500-3v10l-3.500-3H112zM120 8.500q2 2.500 0 5M122 7q3.500 4 0 8M124 5.500q5 5.500 0 11" />
            </svg>
            <div className="w-[54px] text-center text-[10.500px] leading-[15px] tracking-[-0.5px] whitespace-nowrap">
                <div>6:21 AM</div>
                <div>1/28/2020</div>
            </div>
            <svg viewBox="0 0 24 24" className="ml-[10px] h-[24px] w-[24px]">
                <path d="M1 3h14v12H9l-3 3v-3H1z" fill="#fff" />
                <path d="M3 6.500h10M3 9h10M3 11.500h7" stroke="#111" />
                <circle cx="14" cy="16" r="6" fill="#333" stroke="#888" />
                <text x="11.500" y="19.500" className="fill-white font-['Open_Sans'] text-[9px]">2</text>
            </svg>
            <i className="ml-[8px] h-[33px] w-px bg-[#555]" />
            <i className="w-[3px]" />
        </div>
    </footer>
);

const App = () => (
    <div className="flex h-[720px] w-[1280px] flex-col overflow-hidden font-['Open_Sans','Noto_Sans',sans-serif]">
        <TitleBar />
        <MenuBar />
        <div className="flex h-[607px]">
            <main className="relative w-[1254px] border-t border-l border-t-[#555] border-l-[#8a8aa0] bg-linear-to-b from-[#333366] via-[#484675] via-66% to-[#aaa9c0]">
                <div className="absolute top-0 -left-px h-[606px] w-[1254px]">
                    <Scene />
                    <SpecTree />
                    <Palettes />
                    <PolylineDialog />
                    <Pointer />
                </div>
            </main>
            <RightToolbar />
        </div>
        <BottomToolbar />
        <StatusBar />
        <Taskbar />
    </div>
);

export default App;
